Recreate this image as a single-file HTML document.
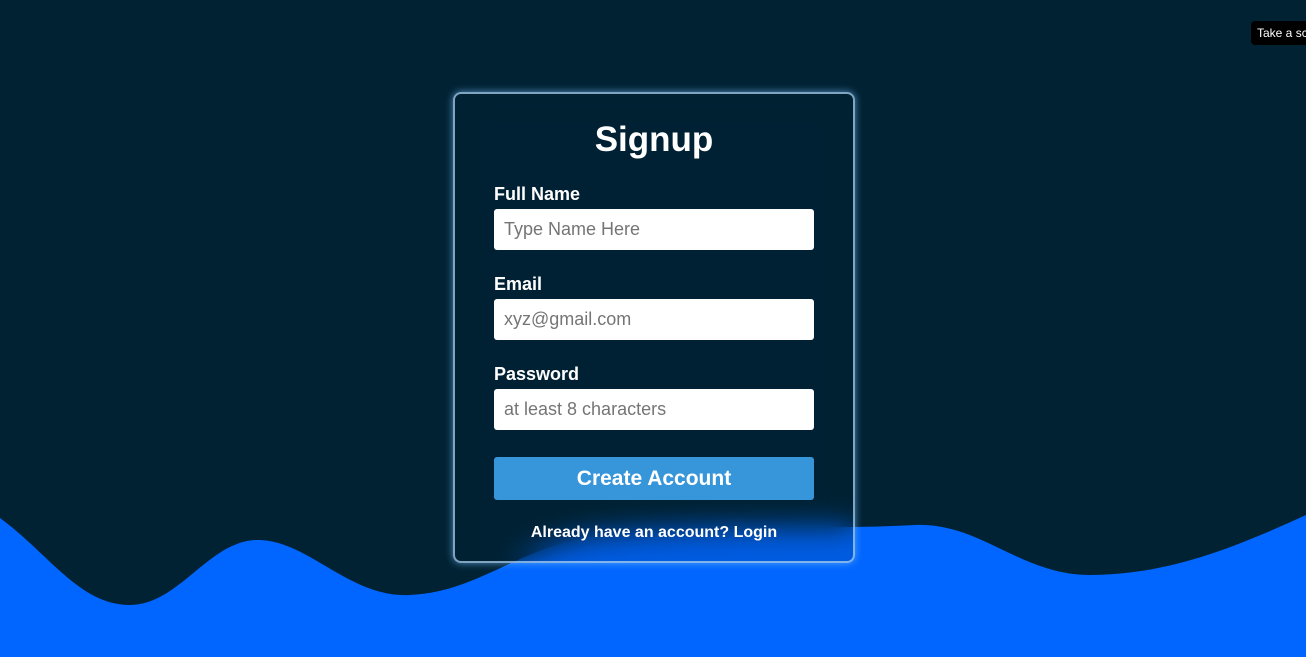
<!DOCTYPE html>
<html><head><meta charset="utf-8"><style>
html,body{margin:0;padding:0;width:1306px;height:657px;overflow:hidden;background:#012233;font-family:"Liberation Sans",Arial,sans-serif;}
svg.wave{position:absolute;left:0;top:0}
.card{position:absolute;left:453px;top:92px;width:398px;height:467px;border:2px solid rgba(170,210,240,0.75);border-radius:8px;box-shadow:0 0 8px rgba(120,190,255,0.7);backdrop-filter:blur(14px);-webkit-backdrop-filter:blur(14px);background:rgba(1,34,51,0.15);}
h1{margin:0;position:absolute;top:26px;left:0;width:100%;text-align:center;color:#fff;font-size:35px;font-weight:bold}
label{position:absolute;left:39px;color:#fff;font-weight:bold;font-size:18px}
.in{position:absolute;left:39px;width:320px;height:41px;background:#fff;border-radius:3px;color:#757575;font-size:18px;line-height:41px;padding-left:10px;box-sizing:border-box}
.btn{position:absolute;left:39px;top:363px;width:320px;height:43px;background:#3796da;border-radius:3px;color:#fff;font-weight:bold;font-size:21px;text-align:center;line-height:43px}
.link{position:absolute;top:430px;left:0;width:100%;text-align:center;color:#fff;font-weight:bold;font-size:16px}
.tip{position:absolute;left:1251px;top:21px;background:#000;color:#fff;font-size:12px;padding:5px 6px;border-radius:4px;white-space:nowrap}
</style></head><body>
<svg class="wave" width="1306" height="657" viewBox="0 0 1306 657">
<path fill="#0066ff" d="M0 518 C50 555 80 605 130 605 C180 605 210 538 260 540 C310 542 350 598 410 595 C480 592 520 545 600 535 C700 524 820 530 915 525 C980 522 1020 575 1090 575 C1170 575 1240 545 1306 515 L1306 657 L0 657 Z"/>
</svg>
<div class="card">
<h1>Signup</h1>
<label style="top:90px">Full Name</label>
<div class="in" style="top:115px">Type Name Here</div>
<label style="top:180px">Email</label>
<div class="in" style="top:205px">xyz@gmail.com</div>
<label style="top:270px">Password</label>
<div class="in" style="top:295px">at least 8 characters</div>
<div class="btn">Create Account</div>
<div class="link">Already have an account? Login</div>
</div>
<div class="tip">Take a screenshot</div>
</body></html>
